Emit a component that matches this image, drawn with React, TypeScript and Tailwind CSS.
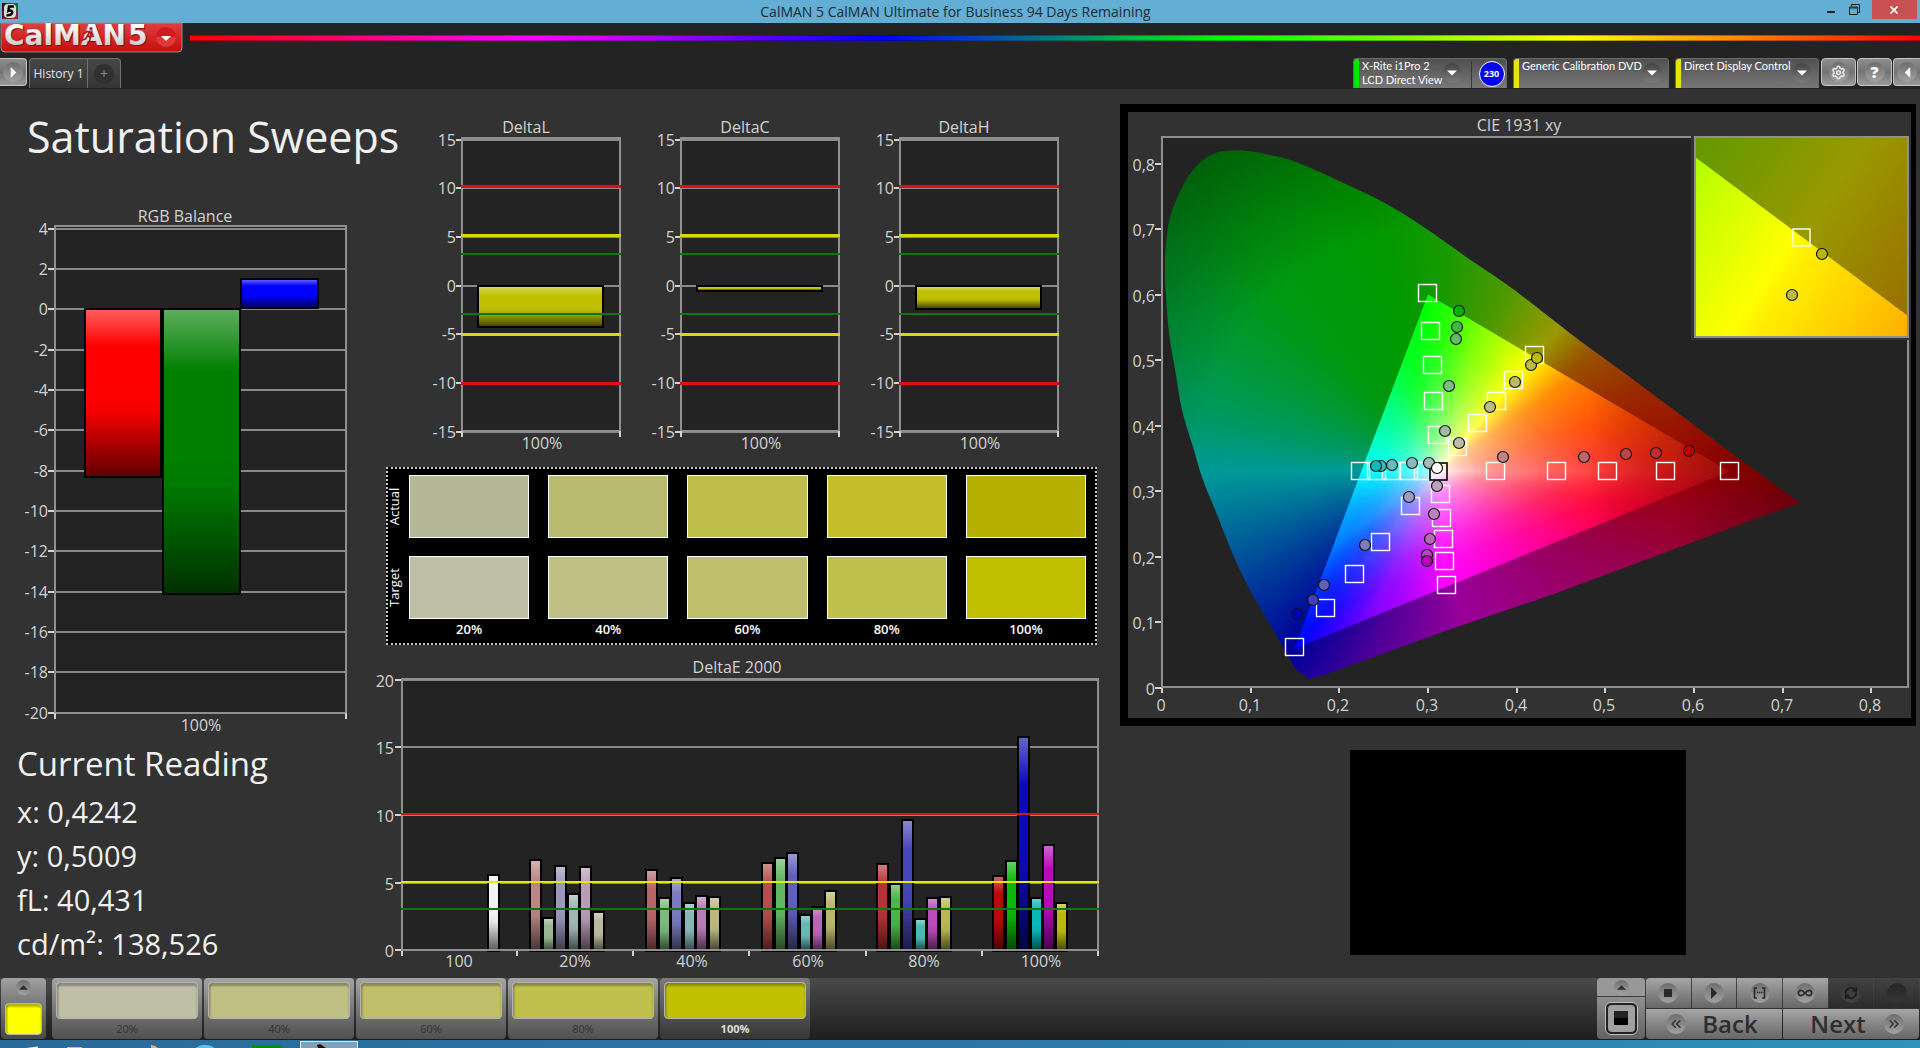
import React from "react";
import { Settings, RefreshCw, Infinity as InfinityIcon, ChevronsLeft, ChevronsRight } from "lucide-react";
import { twMerge } from "tailwind-merge";

const LABEL = "#d2d2d2";
const GRID = "#8a8a8a";
const PLOT = "#232323";

type TextProps = { x: number; y: number; anchor?: "start" | "middle" | "end"; children: React.ReactNode };
function Label({ x, y, anchor = "middle", children }: TextProps) {
  return (
    <text x={x} y={y} textAnchor={anchor} fill={LABEL} fontSize={16}>
      {children}
    </text>
  );
}

/* Shared vertical shading used by every bar: light on top, dark at the base */
function BarShades() {
  return (
    <defs>
      <linearGradient id="shade" x1="0" y1="0" x2="0" y2="1">
        <stop offset="0" stopColor="#fff" stopOpacity="0.36" />
        <stop offset="0.22" stopColor="#fff" stopOpacity="0" />
        <stop offset="0.5" stopColor="#000" stopOpacity="0" />
        <stop offset="0.62" stopColor="#000" stopOpacity="0.05" />
        <stop offset="1" stopColor="#000" stopOpacity="0.62" />
      </linearGradient>
    </defs>
  );
}

type BarProps = { x: number; y: number; w: number; h: number; color: string };
function Bar({ x, y, w, h, color }: BarProps) {
  return (
    <g>
      <rect x={x} y={y} width={w} height={h} fill={color} stroke="#000" strokeWidth={2} />
      <rect x={x + 1} y={y + 1} width={w - 2} height={h - 2} fill="url(#shade)" />
    </g>
  );
}

function RgbBalance() {
  const ticks = [4, 2, 0, -2, -4, -6, -8, -10, -12, -14, -16, -18, -20];
  return (
    <svg viewBox="0 0 375 537" className="mt-[38px] block h-auto w-full" role="img" aria-label="RGB Balance">
      <BarShades />
      <Label x={185} y={17}>RGB Balance</Label>
      <rect x={55} y={22} width={291} height={486} fill={PLOT} />
      {ticks.map((t, i) => {
        const y = Math.round(23.5 + i * 40.35);
        return (
          <g key={t}>
            <rect x={48} y={y - 1} width={7} height={2} fill={LABEL} />
            <rect x={55} y={y - 1} width={291} height={2} fill={GRID} />
            <Label x={48} y={y + 6} anchor="end">{t}</Label>
          </g>
        );
      })}
      <rect x={55} y={21} width={291} height={487} fill="none" stroke="#8f8f8f" strokeWidth={2} />
      <rect x={54} y={508} width={2} height={6} fill={LABEL} />
      <rect x={345} y={508} width={2} height={6} fill={LABEL} />
      <Bar x={85} y={104} w={76} h={168} color="#ff0000" />
      <Bar x={163} y={104} w={77} h={285} color="#008000" />
      <Bar x={241} y={74} w={77} h={29} color="#0000ff" />
      <Label x={201} y={526}>100%</Label>
    </svg>
  );
}

function DeltaChart({ title, depth }: { title: string; depth: number }) {
  const ticks = [15, 10, 5, 0, -5, -10, -15];
  const limits: [number, string, number][] = [
    [71, "#e01010", 3], [120, "#d8d810", 3], [139, "#0a7a0a", 2],
    [199, "#0a7a0a", 2], [219, "#d8d810", 3], [268, "#e01010", 3],
  ];
  return (
    <svg viewBox="0 0 219 340" className="block h-auto w-full" role="img" aria-label={title}>
      <Label x={104} y={18}>{title}</Label>
      <rect x={40} y={23} width={158} height={293} fill={PLOT} />
      {ticks.map((t, i) => {
        const y = Math.round(24.5 + i * 48.7);
        return (
          <g key={t}>
            <rect x={34} y={y - 1} width={6} height={2} fill={LABEL} />
            <rect x={40} y={y - 1} width={158} height={2} fill={GRID} />
            <Label x={34} y={y + 6} anchor="end">{t}</Label>
          </g>
        );
      })}
      <rect x={40} y={23} width={158} height={293} fill="none" stroke="#8f8f8f" strokeWidth={2} />
      <rect x={39} y={316} width={2} height={6} fill={LABEL} />
      <rect x={197} y={316} width={2} height={6} fill={LABEL} />
      <Bar x={56} y={171} w={125} h={depth} color="#c0c000" />
      {limits.map(([y, c, h]) => (
        <rect key={y} x={39} y={y - 1} width={160} height={h} fill={c} />
      ))}
      <Label x={120} y={334}>100%</Label>
    </svg>
  );
}

const SWEEP = [
  { label: "20%", actual: "#b4b896", target: "#bfbfa5" },
  { label: "40%", actual: "#babb70", target: "#bfbf86" },
  { label: "60%", actual: "#c0be4b", target: "#bfbf6b" },
  { label: "80%", actual: "#c4be28", target: "#bfc04d" },
  { label: "100%", actual: "#b8b000", target: "#c0c000" },
];

function SwatchPanel() {
  return (
    <section className="ml-[11px] mr-[13px] mt-3 flex border-2 border-dotted border-[#c8c8c8] bg-black pb-[3px] pr-[9px] pt-[6px] text-[13px] font-semibold leading-[21px] text-white">
      <div className="flex w-[21px] shrink-0 flex-col gap-[18px]">
        {["Actual", "Target"].map((t) => (
          <div key={t} className="flex h-[63px] items-center justify-center pr-2">
            <span className="-rotate-90 font-medium">{t}</span>
          </div>
        ))}
      </div>
      <div className="grid flex-1 grid-cols-5 gap-x-[19px]">
        {SWEEP.map((s) => (
          <div key={s.label} className="flex flex-col">
            <div className="h-[63px] border border-white" style={{ backgroundColor: s.actual }} />
            <div className="mt-[18px] h-[63px] border border-white" style={{ backgroundColor: s.target }} />
            <span className="text-center">{s.label}</span>
          </div>
        ))}
      </div>
    </section>
  );
}

/* Each bar is [top, colour] in a group that begins at x */
const DE_GROUPS: { x: number; bars: [number, string][] }[] = [
  { x: 113, bars: [[219, "#f2f2f2"]] },
  { x: 155, bars: [[204, "#bb8686"], [262, "#9ab894"], [210, "#9a98bc"], [238, "#9fb6b6"], [211, "#b89cb8"], [256, "#b8b89e"]] },
  { x: 271, bars: [[214, "#b96666"], [242, "#7cb97c"], [222, "#7a7abc"], [247, "#84b6b6"], [240, "#b87cb8"], [241, "#b8b880"]] },
  { x: 387, bars: [[207, "#b84c4c"], [202, "#62b862"], [197, "#6060b8"], [259, "#68b8b8"], [251, "#b864b8"], [235, "#b8b868"]] },
  { x: 502, bars: [[208, "#b83434"], [228, "#46b846"], [164, "#4646b8"], [263, "#4cb8b8"], [242, "#b84cb8"], [241, "#b8b850"]] },
  { x: 618, bars: [[220, "#b80a0a"], [205, "#0ab80a"], [81, "#0a0ab8"], [242, "#0ab8b8"], [189, "#b80ab8"], [247, "#b8b80a"]] },
];

function DeltaE() {
  const ticks: [string, number][] = [["20", 25], ["15", 92], ["10", 160], ["5", 228], ["0", 295]];
  const cats = ["100", "20%", "40%", "60%", "80%", "100%"];
  return (
    <svg viewBox="0 0 735 322" className="mt-[10px] block h-auto w-full" role="img" aria-label="DeltaE 2000">
      <Label x={362} y={18}>DeltaE 2000</Label>
      <rect x={27} y={24} width={696} height={271} fill={PLOT} />
      {ticks.map(([t, y]) => (
        <g key={t}>
          <rect x={20} y={y - 1} width={6} height={2} fill={LABEL} />
          <rect x={27} y={y - 1} width={696} height={2} fill={GRID} />
          <Label x={19} y={y + 7} anchor="end">{t}</Label>
        </g>
      ))}
      {DE_GROUPS.map((g) =>
        g.bars.map(([top, c], i) => (
          <Bar key={g.x + c} x={g.x + Math.round(i * 12.6)} y={top + 1} w={11} h={295 - top} color={c} />
        ))
      )}
      <rect x={27} y={24} width={696} height={271} fill="none" stroke="#8f8f8f" strokeWidth={2} />
      <rect x={26} y={158} width={698} height={2} fill="#d01818" />
      <rect x={26} y={226} width={698} height={2} fill="#e8e800" />
      <rect x={26} y={253} width={698} height={2} fill="#0a780a" />
      {[27, 142, 258, 374, 491, 607, 723].map((x) => (
        <rect key={x} x={x - 1} y={296} width={2} height={5} fill={LABEL} />
      ))}
      {cats.map((c, i) => (
        <Label key={i} x={84 + Math.round(i * 116.3)} y={312}>{c}</Label>
      ))}
    </svg>
  );
}

/* Outline of the visible colours, starting at the blue end and running clockwise */
const LOCUS: [number, number][] = [
  [176, 562], [168, 557], [155, 535], [146, 519], [132, 496], [122, 478], [106, 445], [88, 400], [75, 368], [65, 335],
  [54, 298], [47, 257], [41, 221], [38, 184], [37, 151], [39, 123], [43, 102], [52, 80], [62, 62], [75, 48],
  [88, 41], [98, 39], [119, 39], [142, 43], [168, 50], [209, 68], [251, 88], [282, 106], [313, 127], [344, 149],
  [385, 177], [447, 225], [499, 263], [550, 301], [602, 340], [654, 378], [672, 391], [643, 401], [426, 482],
  [323, 517], [196, 563],
];

function locusPath() {
  const p = LOCUS;
  const n = p.length;
  let d = `M${p[0][0]},${p[0][1]}`;
  for (let i = 0; i < n; i++) {
    const a = p[(i + n - 1) % n];
    const b = p[i];
    const c = p[(i + 1) % n];
    const e = p[(i + 2) % n];
    if (i >= 34 && i < n - 1) {
      d += `L${c[0]},${c[1]}`;
    } else {
      d += `C${b[0] + (c[0] - a[0]) / 6},${b[1] + (c[1] - a[1]) / 6} ${c[0] - (e[0] - b[0]) / 6},${c[1] - (e[1] - b[1]) / 6} ${c[0]},${c[1]}`;
    }
  }
  return d + "Z";
}

const TARGETS: [number, number][] = [
  [299, 181], [302, 219], [304, 253], [305, 289], [309, 323],
  [406, 243], [385, 268], [368, 289], [349, 311], [329, 335],
  [232, 359], [248, 359], [263, 359], [280, 359], [295, 359],
  [367, 359], [428, 359], [479, 359], [537, 359], [601, 359],
  [282, 394], [252, 430], [226, 462], [197, 496], [166, 535],
  [312, 382], [313, 406], [315, 427], [316, 449], [318, 473],
];

const READINGS: [number, number, string][] = [
  [331, 199, "#00b400"], [329, 215, "#40b840"], [328, 227, "#60bc60"], [321, 274, "#80bc80"], [317, 319, "#a0bca0"],
  [403, 253, "#bcbc44"], [409, 246, "#bebe00"], [387, 270, "#bcbc66"], [362, 295, "#bcbc84"], [331, 331, "#bcbca4"],
  [253, 354, "#40b8b8"], [248, 354, "#00bebe"], [264, 353, "#66bcbc"], [284, 351, "#84bcbc"], [301, 351, "#a4bcbc"],
  [375, 345, "#bc8484"], [456, 345, "#bc6666"], [498, 342, "#bc4444"], [528, 341, "#bc3030"], [561, 339, "#c00000"],
  [281, 385, "#9c9cc4"], [237, 433, "#7c7cc0"], [196, 473, "#6060c0"], [185, 488, "#4040bc"], [169, 502, "#0000b4"],
  [309, 374, "#bca0bc"], [306, 402, "#bc84bc"], [302, 427, "#bc66bc"], [299, 443, "#bc44bc"], [299, 449, "#bc00bc"],
  [309, 356, "#ffffff"],
];

function WhiteRamp({ id, x, y }: { id: string; x: number; y: number }) {
  const stops = [[0, 1], [0.1, 0.74], [0.2, 0.54], [0.4, 0.32], [0.6, 0.14], [0.8, 0.04], [1, 0]];
  return (
    <linearGradient id={id} gradientUnits="userSpaceOnUse" x1={310.5} y1={359.5} x2={x} y2={y}>
      {stops.map(([o, a]) => (
        <stop key={o} offset={o} stopColor="#fff" stopOpacity={a} />
      ))}
    </linearGradient>
  );
}

function CieChart() {
  const xs = ["0", "0,1", "0,2", "0,3", "0,4", "0,5", "0,6", "0,7", "0,8"];
  return (
    <svg viewBox="0 0 783 606" className="block h-auto w-full" role="img" aria-label="CIE 1931 xy">
      <defs>
        <clipPath id="locus"><path d={locusPath()} /></clipPath>
        <clipPath id="gamut"><polygon points="300,182.5 601,359.5 166.5,536.5" /></clipPath>
        <clipPath id="inset"><rect x={567} y={25} width={213} height={200} /></clipPath>
        <WhiteRamp id="rampYellow" x={385.1} y={232.6} />
        <WhiteRamp id="rampCyan" x={242.8} y={334} />
        <WhiteRamp id="rampMagenta" x={351.8} y={461} />
        <radialGradient id="falloff" gradientUnits="userSpaceOnUse" cx={310} cy={359} r={400}>
          <stop offset="0.6" stopColor="#000" stopOpacity="0" />
          <stop offset="1" stopColor="#000" stopOpacity="0.4" />
        </radialGradient>
        <linearGradient id="redFall" gradientUnits="userSpaceOnUse" x1={460} y1={0} x2={601} y2={0}>
          <stop offset="0" stopColor="#000" stopOpacity="0" />
          <stop offset="1" stopColor="#000" stopOpacity="0.4" />
        </linearGradient>
        <linearGradient id="insetBright" gradientUnits="userSpaceOnUse" x1={565} y1={54} x2={792} y2={204}>
          <stop offset="0" stopColor="#b4ff00" />
          <stop offset="0.45" stopColor="#ffff00" />
          <stop offset="0.52" stopColor="#fff000" />
          <stop offset="1" stopColor="#ffb000" />
        </linearGradient>
        <linearGradient id="insetDark" gradientUnits="userSpaceOnUse" x1={565} y1={54} x2={792} y2={204}>
          <stop offset="0" stopColor="#669900" />
          <stop offset="0.48" stopColor="#999900" />
          <stop offset="1" stopColor="#996c00" />
        </linearGradient>
      </defs>
      <Label x={391} y={19}>CIE 1931 xy</Label>
      <rect x={34} y={25} width={746} height={550} fill={PLOT} stroke="#8f8f8f" strokeWidth={2} />
      <g clipPath="url(#locus)">
        <foreignObject x={0} y={0} width={783} height={606}>
          <div className="h-[606px] w-[783px] bg-[conic-gradient(from_0deg_at_310.5px_359.5px,#149900_0deg,#4d9900_20deg,#999900_39.8deg,#995200_52deg,#992c00_67deg,#990000_90deg,#99001c_98deg,#99004d_115deg,#990073_140deg,#990099_171deg,#4d0099_200deg,#000099_219.1deg,#004d99_245deg,#009999_270deg,#009966_282deg,#00993a_298deg,#009912_318deg,#009900_345deg,#149900_360deg)]" />
        </foreignObject>
        <rect x={0} y={0} width={783} height={606} fill="url(#falloff)" />
      </g>
      <g clipPath="url(#gamut)">
        <foreignObject x={0} y={0} width={783} height={606}>
          <div className="h-[606px] w-[783px] bg-[conic-gradient(from_0deg_at_310.5px_359.5px,#12ff00_0deg,#80ff00_16.2deg,#ffff00_39.8deg,#ff8a00_55deg,#ff4a00_73.4deg,#ff1414_90deg,#ff0030_100deg,#ff0080_118deg,#ff00bf_140deg,#ff00ff_176deg,#8000ff_205.3deg,#0000ff_219.1deg,#0080ff_235deg,#00ffff_270deg,#00ff80_325deg,#00ff20_345deg,#00ff00_356.5deg,#12ff00_360deg)]" />
        </foreignObject>
        <g shapeRendering="crispEdges">
          <polygon points="310.5,359.5 300,182.5 601,359.5" fill="url(#rampYellow)" />
          <polygon points="310.5,359.5 300,182.5 166.5,536.5" fill="url(#rampCyan)" />
          <polygon points="310.5,359.5 166.5,536.5 601,359.5" fill="url(#rampMagenta)" />
        </g>
        <rect x={460} y={180} width={150} height={360} fill="url(#redFall)" />
      </g>
      {TARGETS.map(([x, y]) => (
        <rect key={`${x}-${y}`} x={x - 8.5} y={y - 8.5} width={18} height={17} fill="none" stroke="#fff" strokeWidth={1.4} />
      ))}
      <rect x={302} y={351} width={17} height={17} fill="none" stroke="#000" strokeWidth={1.6} />
      {READINGS.map(([x, y, c]) => (
        <circle key={`${x}-${y}`} cx={x} cy={y} r={5.5} fill={c} stroke="#111" strokeWidth={1.2} />
      ))}
      {xs.map((t, i) => {
        const x = Math.round(34 + i * 88.65);
        return (
          <g key={t}>
            <rect x={x - 1} y={576} width={2} height={5} fill={LABEL} />
            <Label x={x - 1} y={599}>{t}</Label>
          </g>
        );
      })}
      {xs.map((t, i) => {
        const y = Math.round(575.5 - i * 65.5);
        return (
          <g key={t}>
            <rect x={27} y={y - 1} width={6} height={2} fill={LABEL} />
            <Label x={27} y={y + 7} anchor="end">{t}</Label>
          </g>
        );
      })}
      <rect x={563} y={20} width={220} height={208} fill="#323232" />
      <rect x={567} y={25} width={213} height={200} fill="url(#insetDark)" />
      <polygon points="567,45 780,204 780,225 567,225" fill="url(#insetBright)" clipPath="url(#inset)" />
      <rect x={567} y={25} width={213} height={200} fill="none" stroke="#8f8f8f" strokeWidth={2} />
      <rect x={665} y={117} width={17} height={17} fill="none" stroke="#fff" strokeWidth={1.4} />
      <circle cx={694} cy={142} r={5.5} fill="#b8b800" stroke="#111" strokeWidth={1.2} />
      <circle cx={664} cy={183} r={5.5} fill="#bcbc44" stroke="#111" strokeWidth={1.2} />
    </svg>
  );
}

function Logo() {
  return (
    <svg width="182" height="30" viewBox="0 0 182 30" className="overflow-visible" aria-hidden="true">
      <defs>
        <linearGradient id="logoBg" x1="0" y1="0" x2="0" y2="1">
          <stop offset="0" stopColor="#df4040" />
          <stop offset="0.5" stopColor="#d42525" />
          <stop offset="1" stopColor="#c80c0c" />
        </linearGradient>
        <linearGradient id="silver" x1="0" y1="0" x2="0" y2="1">
          <stop offset="0.2" stopColor="#ffffff" />
          <stop offset="1" stopColor="#bdbdbd" />
        </linearGradient>
      </defs>
      <path d="M0 0H181V25Q181 29 177 29H4Q0 29 0 25Z" fill="url(#logoBg)" stroke="#9a8a8a" />
      <g fontFamily="DejaVu Sans" fontWeight="bold" fontSize="28">
        <g fill="#7a1010" aria-hidden="true">
          <text x="4" y="23">CalMAN</text>
          <text x="128" y="23">5</text>
        </g>
        <g fill="url(#silver)">
          <text x="3" y="22">CalMAN</text>
          <text x="127" y="22">5</text>
        </g>
      </g>
      <g fill="none" stroke="#b01515" strokeWidth="1.6" strokeLinecap="round">
        <path d="M89 8l-2.500 4.500M83 10.500l3-2 3 1 2 2.500M86.500 12.500l3 2-1 3.500M86.500 12.500l-2 3.500-3.500 1" />
      </g>
      <circle cx="90" cy="5.500" r="1.500" fill="#b01515" />
      <circle cx="165" cy="14" r="10" fill="#cf1c1c" />
      <path d="M155 14a10 10 0 0 0 20 0z" fill="#dd3a3a" />
      <path d="M160 13h10l-5 5z" fill="#fff" />
    </svg>
  );
}

function Round({ children, className }: { children?: React.ReactNode; className?: string }) {
  return (
    <span className={twMerge("flex size-5 shrink-0 items-center justify-center rounded-full bg-linear-to-b from-[#6e6e6e] to-[#a2a2a2]", className)}>
      {children}
    </span>
  );
}

function Tri({ dir, fill = "#fff", size = 10 }: { dir: "down" | "up" | "right" | "left"; fill?: string; size?: number }) {
  const d = { down: "M0 2.500h10l-5 5z", up: "M0 7.500h10l-5-5z", right: "M2.500 0v10l5-5z", left: "M7.500 0v10l-5-5z" }[dir];
  return (
    <svg width={size} height={size} viewBox="0 0 10 10" aria-hidden="true">
      <path d={d} fill={fill} />
    </svg>
  );
}

function SourceTab({ lines, strip, width, children }: { lines: string[]; strip: string; width: string; children?: React.ReactNode }) {
  return (
    <div className={"flex h-[30px] overflow-hidden rounded-t border border-b-0 border-[#6a6a6a] bg-linear-to-b from-[#505050] to-[#787878] " + width}>
      <span className={"w-[5px] shrink-0 " + strip} />
      <button type="button" className="flex min-w-0 flex-1 items-start justify-between pl-[3px] pr-1.5 text-left font-['Lato',sans-serif] text-[11px] leading-[14px] text-white">
        <span className="whitespace-nowrap">
          {lines.map((l) => (
            <span key={l} className="block">{l}</span>
          ))}
        </span>
        <Round className="mt-1 from-[#454545] to-[#7c7c7c]"><Tri dir="down" /></Round>
      </button>
      {children}
    </div>
  );
}

const silverBtn = "flex h-7 items-center justify-center border border-[#c4c4c4] bg-linear-to-b from-[#8e8e8e] via-[#747474] to-[#9a9a9a]";

function Header() {
  return (
    <header className="bg-[#232323]">
      <div className="flex h-[23px] items-start justify-between bg-[#62aed4] text-[#1c2a33]">
        <svg width="16" height="16" viewBox="0 0 16 16" className="ml-[2px] mt-[3px] w-[88px] shrink-0" preserveAspectRatio="xMinYMin" aria-hidden="true">
          <rect width="16" height="16" fill="#8a1414" />
          <path d="M0 0h6v8H0z" fill="#3c1010" />
          <path d="M9 0h7v8H9z" fill="#1e6a2c" />
          <path d="M0 9h7v7H0z" fill="#5a2020" />
          <path d="M10 8h6v8h-6z" fill="#b01438" />
          <rect x="2" y="1" width="12" height="14" rx="4" fill="#dcdcd0" />
          <path d="M12 3.500H7L6.300 8Q9.800 6.500 10.300 9.200 10.200 12.500 4.500 12.200" fill="none" stroke="#000" strokeWidth="2.400" />
        </svg>
        <h1 className="text-[14px] leading-[23px]">CalMAN 5 CalMAN Ultimate for Business 94 Days Remaining</h1>
        <div className="mr-[3px] flex">
          <button type="button" aria-label="Minimize" className="flex h-[19px] w-5 items-center justify-center">
            <span className="mt-1 h-[2px] w-2 bg-[#1c1c1c]" />
          </button>
          <button type="button" aria-label="Restore" className="ml-1 mr-[3px] flex h-[19px] w-5 items-center justify-center">
            <svg width="11" height="11" viewBox="0 0 11 11" fill="none" stroke="#1c1c1c" aria-hidden="true">
              <path d="M2.500 2.500v-2h8v8h-2" />
              <path d="M.5 3h8v7.500h-8zM.5 4h8" />
            </svg>
          </button>
          <button type="button" aria-label="Close" className="ml-1 flex h-[19px] w-[45px] items-center justify-center bg-[#c75050]">
            <svg width="8" height="8" viewBox="0 0 8 8" stroke="#fff" strokeWidth="1.700" aria-hidden="true">
              <path d="M.5.5l7 7M7.500.5l-7 7" />
            </svg>
          </button>
        </div>
      </div>
      <div className="flex h-[35px] items-start pl-px">
        <button type="button" aria-label="CalMAN 5 menu" className="shrink-0"><Logo /></button>
        <div className="ml-[7px] mt-3 h-[6px] flex-1 border-y border-black/30 bg-[linear-gradient(to_right,#f00,#f0f_20%,#00f_40%,#0f0_60%,#ff0_80%,#f00)]" />
      </div>
      <div className="flex h-[31px] items-start">
        <button type="button" aria-label="Expand" className={silverBtn + " w-[27px] rounded-r border-l-0"}>
          <Round><Tri dir="right" size={11} /></Round>
        </button>
        <nav className="ml-[2px] flex h-[30px] rounded-t border border-b-0 border-[#707070] bg-linear-to-b from-[#484848] to-[#343434]">
          <button type="button" className="w-[58px] border-r border-[#707070] text-center text-[12px] text-[#e4e4e4]">History 1</button>
          <button type="button" aria-label="Add tab" className="flex w-8 items-center justify-center">
            <span className="flex size-5 items-center justify-center rounded-full bg-[#303030] text-[14px] leading-5 text-[#8a8a8a]">+</span>
          </button>
        </nav>
        <div className="ml-auto flex items-start">
          <SourceTab lines={["X-Rite i1Pro 2", "LCD Direct View"]} strip="bg-[#00e600]" width="w-[154px]">
            <span className="ml-1 mt-0.5 w-px bg-[#383838]" />
            <span className="flex w-[34px] items-center justify-center pl-[5px]">
              <span className="flex size-[26px] items-center justify-center rounded-full border border-white bg-[#0000f8] text-[9px] font-bold text-white">230</span>
            </span>
          </SourceTab>
          <div className="ml-[6px]"><SourceTab lines={["Generic Calibration DVD"]} strip="bg-[#e6e600]" width="w-[156px]" /></div>
          <div className="ml-[6px]"><SourceTab lines={["Direct Display Control"]} strip="bg-[#e6e600]" width="w-[144px]" /></div>
          <button type="button" aria-label="Settings" className={silverBtn + " ml-[2px] w-[35px] rounded"}>
            <Round><Settings size={15} color="#e8e8e8" strokeWidth={2.4} /></Round>
          </button>
          <button type="button" aria-label="Help" className={silverBtn + " ml-px w-[35px] rounded"}>
            <Round><span className="text-[16px] font-extrabold leading-5 text-white">?</span></Round>
          </button>
          <button type="button" aria-label="Collapse" className={silverBtn + " ml-px w-[27px] rounded-l border-r-0"}>
            <Round><Tri dir="left" size={11} /></Round>
          </button>
        </div>
      </div>
    </header>
  );
}

const cell = "flex items-center justify-center bg-linear-to-b from-[#a6a6a6] to-[#676767]";
const cellOff = "flex items-center justify-center bg-linear-to-b from-[#424242] to-[#2c2c2c]";
const sunken = "rounded border border-[#b4b4b4] shadow-[inset_0_3px_2px_rgba(0,0,0,0.28),inset_2px_0_1px_rgba(0,0,0,0.15)]";

function Footer() {
  return (
    <footer className="flex h-[62px] items-start bg-linear-to-b from-[#4a4a4a] to-[#1e1e1e] pl-px text-[#2e2e2e]">
      <button type="button" aria-label="Current pattern" className="flex h-[61px] w-[45px] shrink-0 flex-col items-center rounded bg-linear-to-b from-[#a0a0a0] to-[#484848]">
        <Round className="mt-0.5 size-[15px]"><Tri dir="up" fill="#2e2e2e" size={9} /></Round>
        <span className={"mt-2 h-8 w-[37px] bg-[#ffff00] " + sunken} />
      </button>
      <div className="ml-[6px] flex gap-[2px]">
        {SWEEP.map((s, i) => {
          const on = i === 4;
          return (
            <button
              key={s.label}
              type="button"
              className={
                "flex h-[61px] w-[150px] flex-col rounded bg-linear-to-b px-1 pt-1 text-center text-[11px] leading-5 " +
                (on ? "from-[#7c7c7c] to-[#363636] font-bold text-[#dedede]" : "from-[#a4a4a4] to-[#505050] text-[#343434]")
              }
            >
              <span className={"h-[38px] w-full " + sunken} style={{ backgroundColor: s.target }} />
              <span className="w-full">{s.label}</span>
            </button>
          );
        })}
      </div>
      <div className="ml-auto mr-px flex h-[61px] shrink-0 gap-px">
        <div className="flex w-12 flex-col gap-px overflow-hidden rounded">
          <button type="button" aria-label="Show more" className="flex h-[18px] items-center justify-center bg-[#989898]">
            <Round className="size-[15px]"><Tri dir="up" fill="#2e2e2e" size={9} /></Round>
          </button>
          <button type="button" aria-label="Pattern window" className={twMerge(cell, "flex-1 from-[#909090] to-[#626262]")}>
            <span className="flex size-[33px] items-center justify-center rounded-md border border-[#c0c0c0] bg-[#222] p-[2px]">
              <span className="flex size-full items-center justify-center rounded bg-[#a0a0a0]">
                <span className="size-[14px] bg-linear-to-b from-[#222] from-50% to-black to-50%" />
              </span>
            </span>
          </button>
        </div>
        <div className="grid w-[273px] grid-cols-6 grid-rows-2 gap-px overflow-hidden rounded">
          <button type="button" aria-label="Stop" className={cell}><Round><span className="size-2 bg-[#2a2a2a]" /></Round></button>
          <button type="button" aria-label="Play" className={cell}><Round><Tri dir="right" fill="#2a2a2a" size={12} /></Round></button>
          <button type="button" aria-label="Read series" className={cell}>
            <Round>
              <svg width="13" height="12" viewBox="0 0 13 12" fill="none" stroke="#2a2a2a" strokeWidth="1.700" aria-hidden="true">
                <path d="M4 1H1.500v10H4M9 1h2.500v10H9" />
                <path d="M3.800 5.500h1.400M5.900 5.500h1.400M8 5.500h1.400" />
              </svg>
            </Round>
          </button>
          <button type="button" aria-label="Read continuously" className={cell}><Round><InfinityIcon size={16} color="#2a2a2a" strokeWidth={2.4} /></Round></button>
          <button type="button" aria-label="Repeat" disabled className={cellOff}>
            <Round className="from-[#383838] to-[#424242]"><RefreshCw size={14} color="#1c1c1c" strokeWidth={3} /></Round>
          </button>
          <button type="button" aria-label="Record" disabled className={cellOff}><Round className="from-[#262626] to-[#363636]" /></button>
          <button type="button" className={cell + " col-span-3 gap-4 pr-1 text-[24px] font-semibold leading-[30px]"}>
            <Round><ChevronsLeft size={16} /></Round>
            <span>Back</span>
          </button>
          <button type="button" className={cell + " col-span-3 gap-[18px] pl-3 text-[24px] font-semibold leading-[30px]"}>
            <span>Next</span>
            <Round><ChevronsRight size={16} /></Round>
          </button>
        </div>
      </div>
    </footer>
  );
}

function Taskbar() {
  return (
    <div className="flex h-2 items-end overflow-hidden bg-linear-to-r from-[#2a6a9a] via-[#2c76a6] to-[#2f92b8]">
      <svg width="360" height="8" viewBox="0 0 360 8" aria-hidden="true">
        <path d="M26 8l12-1.500V8z" fill="#e8f4ff" />
        <path d="M67 7h15v1H67z" fill="#dcb878" />
        <path d="M151 5l4 1 3 2h-7z" fill="#e8b070" />
        <ellipse cx="205" cy="10" rx="10" ry="5" fill="#5cc0f0" />
        <rect x="252" y="5" width="30" height="3" fill="#009000" />
        <rect x="300.500" y="1.500" width="57" height="10" fill="#7ba3bf" stroke="#dceaf4" />
        <path d="M317 5q4-2 6 1l3 2h-8z" fill="#200808" />
      </svg>
    </div>
  );
}

export default function App() {
  return (
    <div className="flex min-h-screen flex-col bg-[#323232] font-['Open_Sans',sans-serif]">
      <Header />
      <main className="grid flex-1 grid-cols-[minmax(0,375fr)_minmax(0,735fr)_minmax(0,810fr)] items-start bg-[#323232] text-[#f0f0f0]">
        <section className="pt-[18px]">
          <h2 className="pl-[27px] text-[43px] leading-[60px] whitespace-nowrap">Saturation Sweeps</h2>
          <RgbBalance />
          <div className="pl-[17px]">
            <h3 className="text-[33px] leading-[44px]">Current Reading</h3>
            <div className="mt-1 text-[29px] leading-[44px]">
              <p>x: 0,4242</p>
              <p>y: 0,5009</p>
              <p>fL: 40,431</p>
              <p>cd/m²: 138,526</p>
            </div>
          </div>
        </section>
        <section className="pt-[26px]">
          <div className="grid grid-cols-3 pl-[47px] pr-[31px]">
            <DeltaChart title="DeltaL" depth={41} />
            <DeltaChart title="DeltaC" depth={5} />
            <DeltaChart title="DeltaH" depth={23} />
          </div>
          <SwatchPanel />
          <DeltaE />
        </section>
        <section className="pl-[10px] pr-[4px] pt-[15px]">
          <div className="border-8 border-r-[5px] border-black">
            <CieChart />
          </div>
          <div className="mx-auto mt-6 h-[205px] w-[336px] bg-black" />
        </section>
      </main>
      <Footer />
      <Taskbar />
    </div>
  );
}
